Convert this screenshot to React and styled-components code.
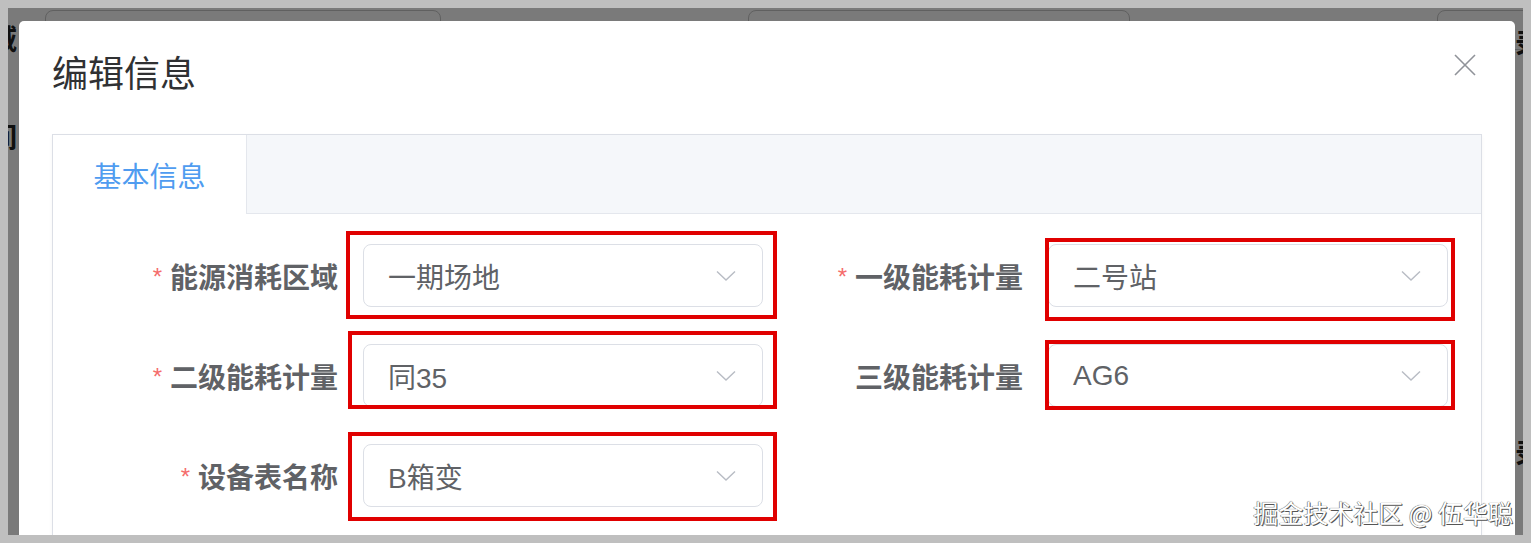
import React from "react";
import styled, { createGlobalStyle } from "styled-components";

const Global = createGlobalStyle`
  html, body { background: #bfbfbf; }
  body { margin: 8px; font-family: "Liberation Sans", "Noto Sans CJK SC", sans-serif; }
  * { box-sizing: border-box; }
`;

const Page = styled.div`
  position: relative;
  width: 1515px;
  height: 527px;
  overflow: hidden;
  background: #ffffff;
`;

/* ---------- background page (dimmed by the mask) ---------- */
const BgPage = styled.div`
  display: flex;
  flex-direction: column;
  padding-top: 2px;
`;

const BgFilterBar = styled.div`
  display: flex;
  padding-left: 37px;
`;

const BgInput = styled.div`
  flex-shrink: 0;
  width: ${(p) => p.$w}px;
  margin-right: ${(p) => p.$mr}px;
  height: 40px;
  border: 1px solid #c8c8c8;
  border-radius: 8px;
`;

const BgBody = styled.div`
  display: flex;
  justify-content: space-between;
`;

const BgSide = styled.div`
  display: flex;
  flex-direction: column;
  margin-left: -19px;
  margin-top: -24px;
`;

const BgLabel = styled.div`
  font-size: 28px;
  font-weight: 700;
  color: #222;
  height: ${(p) => p.$h}px;
  line-height: 30px;
`;

const BgRight = styled.div`
  display: flex;
  flex-direction: column;
  margin-right: -20px;
  margin-top: -20px;
`;

/* ---------- mask + dialog ---------- */
const Mask = styled.div`
  position: absolute;
  inset: 0;
  background: rgba(0, 0, 0, 0.52);
  padding: 13px 0 0 11px;
`;

const Dialog = styled.div`
  position: relative;
  width: 1496px;
  min-height: 560px;
  background: #ffffff;
  border-radius: 5px;
`;

const DialogHeader = styled.div`
  padding: 33px 33px 0;
`;

const Title = styled.h2`
  margin: 0;
  font-size: 36px;
  line-height: 42px;
  font-weight: 400;
  color: #303133;
`;

const CloseButton = styled.button`
  position: absolute;
  top: 32px;
  right: 38px;
  width: 24px;
  height: 24px;
  padding: 0;
  border: 0;
  background: transparent;
  display: flex;
  align-items: center;
  justify-content: center;
  color: #909399;
`;

const Card = styled.div`
  margin: 38px 33px 0;
  border: 1px solid #dcdfe6;
  box-shadow: 0 2px 4px rgba(0, 0, 0, 0.04);
`;

const TabHeader = styled.div`
  display: flex;
  height: 79px;
  background: #f5f7fa;
  border-bottom: 1px solid #e4e7ed;
`;

const Tab = styled.div`
  width: 194px;
  height: 79px;
  background: ${(p) => (p.$active ? "#ffffff" : "transparent")};
  border-right: 1px solid #e4e7ed;
  display: flex;
  align-items: center;
  justify-content: center;
  font-size: 28px;
  color: ${(p) => (p.$active ? "#4f9cf0" : "#909399")};
  margin-bottom: -1px;
`;

const FormBody = styled.div`
  display: grid;
  grid-template-columns: 685px 685px;
  row-gap: 37px;
  padding: 30px 25px 40px;
`;

const FormItem = styled.div`
  display: flex;
  align-items: center;
`;

const Label = styled.label`
  width: 285px;
  padding-right: 25px;
  text-align: right;
  font-size: 28px;
  font-weight: 700;
  color: #606266;
  white-space: nowrap;
`;

const Star = styled.span`
  color: #f56c6c;
  font-weight: 400;
  font-size: 24px;
  margin-right: 8px;
  position: relative;
  top: -3px;
`;

const SelectBox = styled.div`
  position: relative;
  width: 400px;
  height: 63px;
  border: 1px solid #dcdfe6;
  border-radius: 8px;
  padding: 0 26px 0 24px;
  display: flex;
  align-items: center;
  justify-content: space-between;
  font-size: 28px;
  color: #606266;
  background: #fff;
`;

const Highlight = styled.span`
  position: absolute;
  top: ${(p) => -p.$t}px;
  right: ${(p) => -p.$r}px;
  bottom: ${(p) => -p.$b}px;
  left: ${(p) => -p.$l}px;
  border: 4px solid #e00000;
  pointer-events: none;
`;

const Watermark = styled.div`
  position: absolute;
  right: 10px;
  bottom: 8px;
  font-family: "Noto Sans CJK SC", sans-serif;
  font-size: 25px;
  line-height: 30px;
  color: #ffffff;
  text-shadow: 1px 1px 0 #555, -0.5px -0.5px 0 #777, 0 0 1px #444;
`;

const Chevron = () => (
  <svg width="20" height="12" viewBox="0 0 20 12" fill="none">
    <path d="M1 1.5 L10 10 L19 1.5" stroke="#b8bcc4" strokeWidth="1.4" />
  </svg>
);

const fields = [
  { label: "能源消耗区域", value: "一期场地", req: true, hl: [14, 15, 13, 18] },
  { label: "一级能耗计量", value: "二号站", req: true, hl: [7, 8, 15, 4] },
  { label: "二级能耗计量", value: "同35", req: true, hl: [14, 15, 3, 16] },
  { label: "三级能耗计量", value: "AG6", req: false, hl: [5, 8, 4, 4] },
  { label: "设备表名称", value: "B箱变", req: true, hl: [13, 15, 15, 16] },
];

export default function App() {
  return (
    <>
      <Global />
      <Page>
        <BgPage>
          <BgFilterBar>
            <BgInput $w={396} $mr={307} />
            <BgInput $w={382} $mr={307} />
            <BgInput $w={120} $mr={0} />
          </BgFilterBar>
          <BgBody>
            <BgSide>
              <BgLabel $h={98}>域</BgLabel>
              <BgLabel $h={98}>间</BgLabel>
              <BgLabel $h={98}>E</BgLabel>
            </BgSide>
            <BgRight>
              <BgLabel $h={410}>录</BgLabel>
              <BgLabel $h={40}>录</BgLabel>
            </BgRight>
          </BgBody>
        </BgPage>

        <Mask>
          <Dialog>
            <DialogHeader>
              <Title>编辑信息</Title>
            </DialogHeader>
            <CloseButton aria-label="关闭">
              <svg width="22" height="22" viewBox="0 0 22 22">
                <path d="M1 1 L21 21 M21 1 L1 21" stroke="#909399" strokeWidth="1.6" />
              </svg>
            </CloseButton>
            <Card>
              <TabHeader>
                <Tab $active>基本信息</Tab>
              </TabHeader>
              <FormBody>
                {fields.map((f) => (
                  <FormItem key={f.label}>
                    <Label>
                      {f.req && <Star>*</Star>}
                      {f.label}
                    </Label>
                    <SelectBox>
                      <span>{f.value}</span>
                      <Chevron />
                      <Highlight $t={f.hl[0]} $r={f.hl[1]} $b={f.hl[2]} $l={f.hl[3]} />
                    </SelectBox>
                  </FormItem>
                ))}
              </FormBody>
            </Card>
          </Dialog>
        </Mask>
        <Watermark>掘金技术社区 @ 伍华聪</Watermark>
      </Page>
    </>
  );
}
